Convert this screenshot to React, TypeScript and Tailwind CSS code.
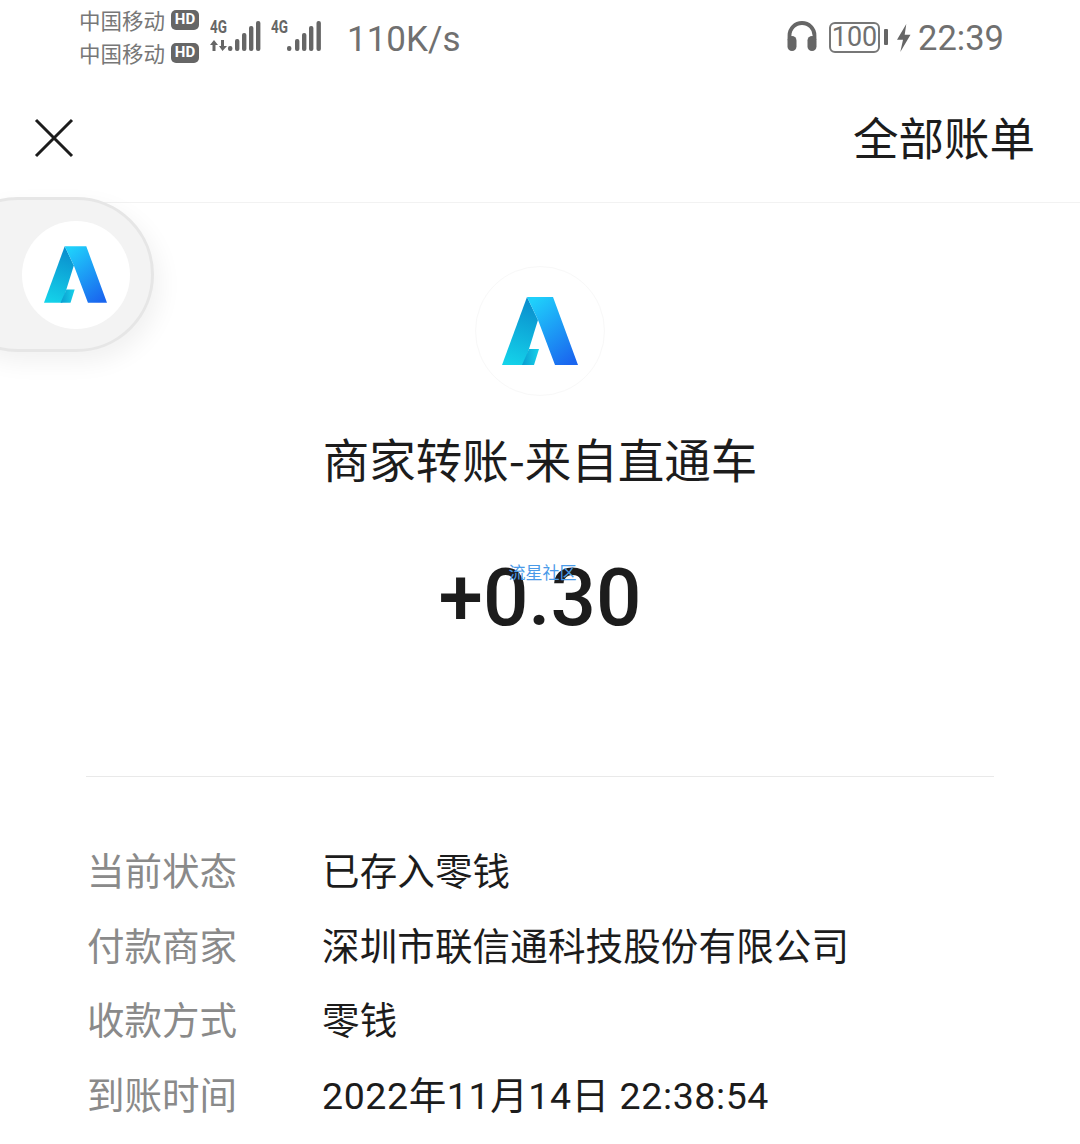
const cjk = { fontFamily: '"Noto Sans CJK SC", "Noto Sans", sans-serif' };
const mixed = { fontFamily: 'Roboto, "Noto Sans CJK SC", sans-serif' };

const rows = [
  { label: "当前状态", value: "已存入零钱", spacing: "tracking-[0.15px]" },
  { label: "付款商家", value: "深圳市联信通科技股份有限公司", spacing: "tracking-[0.15px]" },
  { label: "收款方式", value: "零钱", spacing: "tracking-[0.15px]" },
  { label: "到账时间", value: "2022年11月14日 22:38:54", spacing: "tracking-[0.6px]" },
];

const Logo = ({ id, className }: { id: string; className: string }) => (
  <svg viewBox="0 0 76 68" className={className}>
    <defs>
      <linearGradient id={id + "a"} x1="0.4" y1="0" x2="0.2" y2="1">
        <stop offset="0" stopColor="#0a8fce" />
        <stop offset="1" stopColor="#14d3ea" />
      </linearGradient>
      <linearGradient id={id + "b"} x1="0.2" y1="0" x2="0.8" y2="1">
        <stop offset="0" stopColor="#1fd0fb" />
        <stop offset="1" stopColor="#1a66ef" />
      </linearGradient>
      <linearGradient id={id + "c"} x1="0" y1="0.5" x2="1" y2="0.5">
        <stop offset="0" stopColor="#0a9cd0" />
        <stop offset="1" stopColor="#17d2ea" />
      </linearGradient>
    </defs>
    <polygon points="25,0 36,23 27,52 22,68 0,68" fill={`url(#${id}a)`} />
    <polygon points="27,52 37,52 32,68 20,68" fill={`url(#${id}c)`} />
    <polygon points="25,0 51,0 76,68 53,68 36,23" fill={`url(#${id}b)`} />
  </svg>
);

const HdBadge = () => (
  <span className="ml-[6px] flex h-[20px] w-[28px] items-center justify-center rounded-[5px] bg-[#666666] text-[15px] font-bold leading-none text-white" style={{ fontFamily: "Roboto, sans-serif" }}>
    HD
  </span>
);

const Carrier = () => (
  <div className="-ml-[1px] flex h-[33px] items-center text-[21.500px] leading-none text-[#777777]" style={cjk}>
    中国移动
    <HdBadge />
  </div>
);

const Signal = ({ bars, arrows, width }: { bars: [number, number][]; arrows?: boolean; width: number }) => (
  <svg viewBox={`0 -6 ${width} 37`} width={width} height={37}>
    <text x="0" y="13" fontSize="18" fontWeight="700" fill="#666666" fontFamily="Roboto" textLength="17" lengthAdjust="spacingAndGlyphs">
      4G
    </text>
    {arrows && (
      <g fill="#666666">
        <path d="M4 20L8 25H5.500V31H2.500V25H0Z" />
        <path d="M11 20H14V26H17L12.500 31L9 26H11Z" />
      </g>
    )}
    {bars.map(([x, h]) => (
      <rect key={x} x={x} y={31 - h} width="4.400" height={h} rx="2" fill="#666666" />
    ))}
  </svg>
);

const StatusBar = () => (
  <div className="flex h-[75px] shrink-0 items-center justify-between pl-[80px] pr-[78px]" style={{ fontFamily: "Roboto, sans-serif" }}>
    <div className="flex items-center">
      <div className="-mt-[3px] flex flex-col">
        <Carrier />
        <Carrier />
      </div>
      <div className="-mt-[10px] ml-[11px] flex items-center gap-[10px]">
        <Signal width={51} bars={[[18, 5], [25, 12], [32, 18], [39, 25], [46, 30]]} arrows />
        <Signal width={50} bars={[[16, 5], [24, 12], [31, 18], [38, 25], [45.500, 30]]} />
      </div>
      <span className="ml-[26px] mt-[3px] text-[35px] leading-none text-[#707070]">110K/s</span>
    </div>
    <div className="flex items-center">
      <svg viewBox="0 0 30 30" className="-mt-[3px] h-[30px] w-[30px]">
        <path d="M2.500 19V14.500a12.500 12.500 0 0 1 25 0v4.500" fill="none" stroke="#666666" strokeWidth="3.800" />
        <rect x="0.500" y="15" width="9" height="15" rx="4.500" fill="#666666" />
        <rect x="20.500" y="15" width="9" height="15" rx="4.500" fill="#666666" />
      </svg>
      <div className="-mt-[1px] ml-[12px] flex h-[31px] w-[51px] items-center justify-center rounded-[6px] border-2 border-[#777777] text-[27px] leading-none text-[#707070]">
        100
      </div>
      <div className="-mt-[1px] ml-[4px] h-[16px] w-[4px] rounded-[1px] bg-[#666666]" />
      <svg viewBox="0 0 14 28" className="ml-[9px] h-[28px] w-[14px]">
        <polygon points="9.300,0 0,15.700 6,15.700 3.300,28 13.500,10.700 7.700,10.700" fill="#666666" />
      </svg>
      <span className="ml-[7px] mt-[2px] w-[84px] text-[34.500px] leading-none text-[#707070]">22:39</span>
    </div>
  </div>
);

const App = () => {
  return (
    <div className="relative flex h-[1144px] w-[1080px] flex-col overflow-hidden bg-white" style={cjk}>
      <StatusBar />

      <div className="flex h-[128px] shrink-0 items-center justify-between border-b border-[#f2f2f2] pl-[34px] pr-[45px]">
        <svg viewBox="0 0 40 40" className="-mt-[2px] h-[40px] w-[40px]">
          <path d="M2 2L38 38M38 2L2 38" stroke="#1c1c1c" strokeWidth="3" fill="none" />
        </svg>
        <span className="-mt-[3px] text-[45.500px] leading-none text-[#1c1c1c]">全部账单</span>
      </div>

      <div className="flex flex-col items-center">
        <div className="mt-[63px] flex h-[130px] w-[130px] items-center justify-center rounded-full border border-[#f8f8f8]">
          <Logo id="main" className="h-[68px] w-[76px]" />
        </div>
        <div className="mt-[32px] text-[46.500px] leading-[60px] text-[#1c1c1c]">商家转账-来自直通车</div>
        <div className="relative mt-[64px] text-[80px] font-medium leading-[92px] text-[#1c1c1c]" style={{ fontFamily: "Roboto, sans-serif" }}>
          +0.30
          <span className="absolute left-[70px] top-[8px] text-[17px] font-normal leading-[24px] text-[#4a9ae8]" style={cjk}>
            流星社区
          </span>
        </div>
      </div>

      <div className="mx-[86px] mt-[132px] border-t border-[#e9e9e9]" />

      <div className="ml-[87px] mt-[66px] flex flex-col gap-[22.500px]">
        {rows.map((row) => (
          <div key={row.label} className="flex h-[52px] items-center text-[37.500px] leading-none">
            <span className="w-[235px] text-[#8a8a8a]">{row.label}</span>
            <span className={`pt-[8px] text-[#1c1c1c] ${row.spacing}`} style={mixed}>
              {row.value}
            </span>
          </div>
        ))}
      </div>

      <div className="absolute left-[-60px] top-[197px] flex h-[155px] w-[214px] items-center justify-end rounded-full border-[3px] border-[#e6e6e6] bg-[#f3f3f3] pr-[21px] shadow-[6px_10px_24px_rgba(0,0,0,0.06)]">
        <div className="flex h-[108px] w-[108px] items-center justify-center rounded-full bg-white">
          <Logo id="float" className="mr-[2px] h-[57px] w-[63px]" />
        </div>
      </div>
    </div>
  );
};

export default App;
